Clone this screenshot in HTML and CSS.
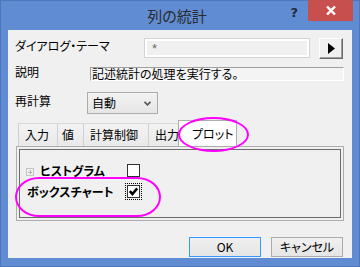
FILE: index.html
```html
<!DOCTYPE html>
<html lang="ja">
  <head>
    <meta charset="UTF-8" />
    <title>列の統計</title>
    <link rel="stylesheet" href="styles.css">
  </head>
  <body>
    <div class="window">
      <div class="titlebar">
        <div class="title">列の統計</div>
        <div class="controls">
          <span class="help">?</span>
          <span class="close">
            <svg width="10" height="9" viewBox="0 0 10 9">
              <path d="M1 0.5 L9 8.5 M9 0.5 L1 8.5" stroke="#fff" stroke-width="2.4" />
            </svg>
          </span>
        </div>
      </div>

      <div class="client">
        <div class="row row-theme">
          <span class="label">ダイアログ・テーマ</span>
          <div class="theme-box">*</div>
          <button class="arrow-btn">
            <svg width="7" height="11" viewBox="0 0 7 11"><path d="M0 0 L7 5.5 L0 11 Z" fill="#000" /></svg>
          </button>
        </div>

        <div class="row row-desc">
          <span class="label">説明</span>
          <div class="desc">記述統計の処理を実行する。</div>
        </div>

        <div class="row row-recalc">
          <span class="label">再計算</span>
          <div class="select">
            <span>自動</span>
            <svg width="7" height="5" viewBox="0 0 7 5"><path d="M0.5 0.8 L3.5 3.8 L6.5 0.8" stroke="#555" stroke-width="1.6" fill="none" /></svg>
          </div>
        </div>

        <div class="tabs">
          <span class="tab tab-in">入力</span>
          <span class="tab tab-val">値</span>
          <span class="tab tab-calc">計算制御</span>
          <span class="tab tab-out">出力</span>
          <span class="tab tab-plot active">プロット</span>
        </div>

        <div class="panel">
          <div class="panel-inner">
            <div class="opt">
              <span class="opt-name"><span class="expander"></span>ヒストグラム</span>
              <span class="check"></span>
            </div>
            <div class="opt">
              <span class="opt-name">ボックスチャート</span>
              <span class="check focus">
                <svg width="11" height="11" viewBox="0 0 11 11"><path d="M1.8 5.2 L4.4 8 L9.2 2.4" stroke="#000" stroke-width="2.6" fill="none" /></svg>
              </span>
            </div>
          </div>
        </div>

        <div class="actions">
          <button class="btn default">OK</button>
          <button class="btn">キャンセル</button>
        </div>
      </div>

      <div class="mark mark-tab"></div>
      <div class="mark mark-box"></div>
    </div>
  </body>
</html>
```

FILE: styles.css
```css
* {
  box-sizing: border-box;
}

body {
  margin: 0;
  font-family: "Noto Sans CJK JP", "Noto Sans", sans-serif;
  font-size: 12px;
  font-feature-settings: "palt";
  color: #000;
}

.window {
  position: relative;
  width: 360px;
  height: 267px;
  background: #608cd4;
  border: 1px solid #4f76b8;
  padding: 0 7px 7px 7px;
}

.titlebar {
  display: grid;
  height: 30px;
  margin: -1px -7px 0 -7px;
  padding-right: 6px;
}

.title,
.controls {
  grid-area: 1 / 1;
}

.title {
  justify-self: center;
  align-self: center;
  font-size: 15px;
  line-height: 20px;
  color: #2b2b2b;
  margin-top: 1px;
}

.controls {
  justify-self: end;
  display: flex;
  align-items: flex-start;
}

.help {
  font-family: "DejaVu Sans", sans-serif;
  font-weight: bold;
  font-size: 13px;
  line-height: 16px;
  color: #222a36;
  margin: 5px 10px 0 0;
}

.close {
  display: flex;
  align-items: center;
  justify-content: center;
  width: 45px;
  height: 21px;
  background: #c7504f;
}

.client {
  height: 228px;
  background: #f0f0f0;
  padding: 0 8px;
  display: flex;
  flex-direction: column;
}

.row {
  display: flex;
  align-items: center;
}

.label {
  padding-bottom: 4px;
  margin-left: -1px;
  line-height: 14px;
}

.row-theme {
  height: 20px;
  margin-top: 8px;
}

.row-theme .label {
  width: 129px;
}

.theme-box {
  width: 166px;
  height: 20px;
  border: 1px solid #d4d4d4;
  box-shadow: inset 0 0 0 2px #fff;
  background: #f0f0f0;
  color: #6f6f6f;
  font-family: "Liberation Sans", sans-serif;
  font-size: 13px;
  padding-left: 7px;
  line-height: 20px;
}

.arrow-btn {
  width: 24px;
  height: 21px;
  margin-left: 9px;
  padding: 0;
  display: flex;
  align-items: center;
  justify-content: center;
  background: #f0f0f0;
  border: 1px solid;
  border-color: #fff #696969 #696969 #fff;
  box-shadow: inset -1px -1px 0 #a0a0a0;
}

.row-desc {
  height: 14px;
  margin-top: 9px;
}

.row-desc .label {
  width: 75px;
}

.desc {
  flex: 1;
  height: 14px;
  line-height: 12px;
  border: 1px solid;
  border-color: #a0a0a0 #fff #fff #a0a0a0;
  background: #f4f4f4;
  padding-left: 1px;
  white-space: nowrap;
}

.row-recalc {
  height: 22px;
  margin-top: 11px;
}

.row-recalc .label {
  width: 72px;
}

.select {
  width: 71px;
  height: 22px;
  border: 1px solid #acacac;
  background: linear-gradient(#f2f2f2, #e6e6e6);
  display: flex;
  align-items: center;
  justify-content: space-between;
  padding: 0 6px 0 4px;
  line-height: 14px;
}

.tabs {
  display: flex;
  align-items: flex-end;
  height: 26px;
  margin-top: 6px;
  padding-left: 2px;
}

.tab {
  height: 23px;
  line-height: 21px;
  padding-left: 6px;
  background: linear-gradient(#f3f3f3, #e9e9e9);
  border-top: 1px solid #d9d9d9;
  border-left: 1px solid #d0d0d0;
  white-space: nowrap;
  overflow: hidden;
}

.tab-in {
  width: 39px;
}

.tab-val {
  width: 26px;
  padding-left: 4px;
}

.tab-calc {
  width: 65px;
}

.tab-out {
  width: 30px;
}

.tab.active {
  width: 59px;
  height: 26px;
  line-height: 25px;
  padding-left: 13px;
  background: #fff;
  border: 1px solid #adadad;
  border-bottom: none;
}

.panel {
  width: 328px;
  height: 75px;
  border: 1px solid #adadad;
  padding: 2px;
}

.panel-inner {
  height: 100%;
  border: 1px solid #6b6b6b;
  padding-top: 10px;
}

.opt {
  display: flex;
  align-items: center;
  height: 21px;
}

.opt-name {
  width: 107px;
  padding-left: 7px;
  font-weight: bold;
  line-height: 14px;
  display: flex;
  align-items: center;
  white-space: nowrap;
}

.expander {
  width: 8px;
  height: 8px;
  border: 1px solid #c4c4c4;
  margin: 3px 6px 0 -1px;
  background:
    linear-gradient(#b0b0b0, #b0b0b0) center / 4px 1px no-repeat,
    linear-gradient(#b0b0b0, #b0b0b0) center / 1px 4px no-repeat;
}

.check {
  width: 13px;
  height: 13px;
  border: 1px solid #333;
  background: #fff;
  display: flex;
  align-items: center;
  justify-content: center;
}

.check.focus {
  outline: 1px dotted #000;
  outline-offset: 1px;
}

.actions {
  display: flex;
  justify-content: flex-end;
  gap: 10px;
  margin-top: 16px;
  padding-right: 1px;
}

.btn {
  width: 72px;
  height: 20px;
  padding: 0;
  font: inherit;
  line-height: 16px;
  color: #000;
  background: linear-gradient(#f0f0f0, #e5e5e5);
  border: 1px solid #acacac;
}

.btn.default {
  border-color: #3399ff;
}

.mark {
  position: absolute;
  border: 2px solid #ff00ff;
}

.mark-tab {
  left: 177px;
  top: 116px;
  width: 71px;
  height: 35px;
  border-radius: 50%;
}

.mark-box {
  left: 14px;
  top: 176px;
  width: 146px;
  height: 40px;
  border-radius: 24px / 20px;
}
```
